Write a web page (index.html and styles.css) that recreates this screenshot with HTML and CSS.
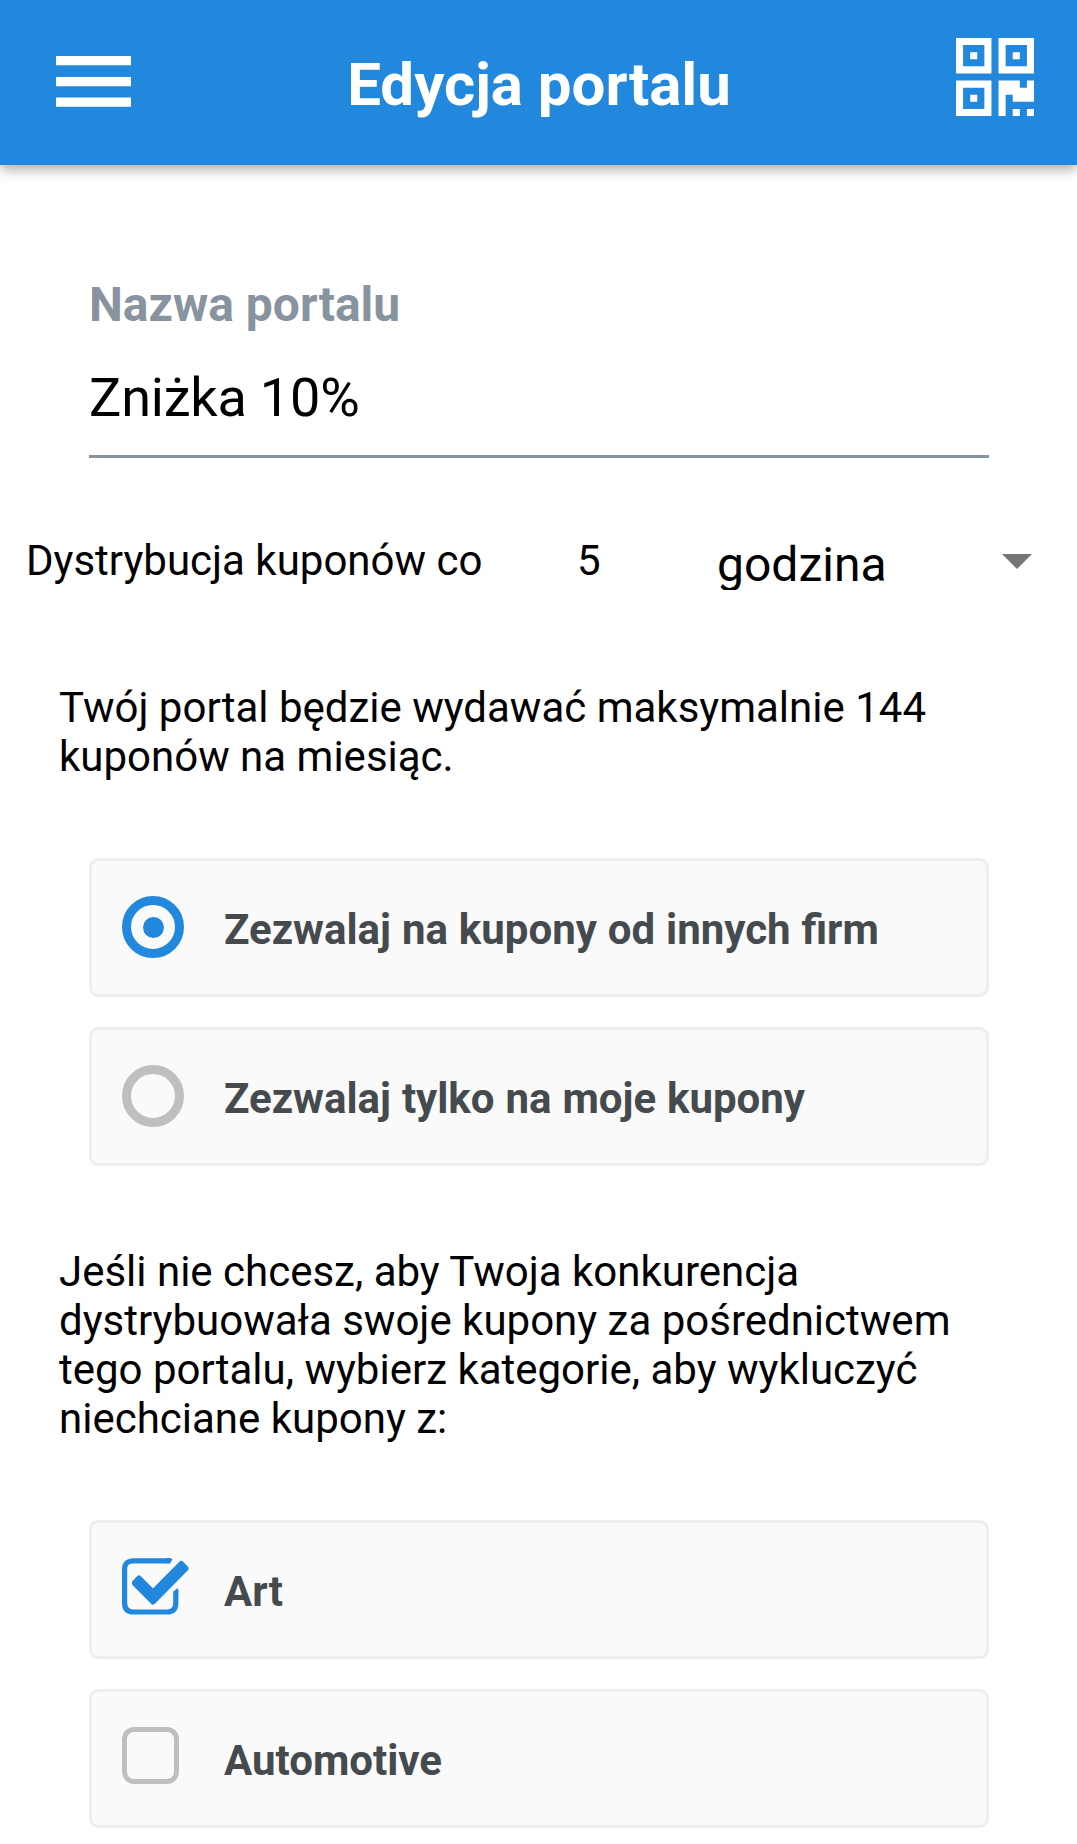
FILE: index.html
```html
<!DOCTYPE html>
<html lang="pl">
<head>
<meta charset="utf-8">
<title>Edycja portalu</title>
<link rel="stylesheet" href="styles.css">
</head>
<body>
<header class="topbar">
  <svg class="menu-icon" viewBox="0 0 75 51"><path d="M0 0h75v9.2H0zM0 21h75v9.2H0zM0 41.6h75v9.2H0z" fill="#fff"/></svg>
  <h1 class="title">Edycja portalu</h1>
  <svg class="qr-icon" viewBox="0 0 11 11"><path fill="#fff" fill-rule="evenodd" d="M0 0h5v5H0zM1 1v3h3V1zM2 2h1v1H2zM6 0h5v5H6zM7 1v3h3V1zM8 2h1v1H8zM0 6h5v5H0zM1 7v3h3V7zM2 8h1v1H2zM6 6h3v1h1V6h1v3H8V8H7v3H6zM8 10h1v1H8zM10 10h1v1h-1z"/></svg>
</header>
<main>
  <div class="field">
    <div class="label">Nazwa portalu</div>
    <div class="value">Zniżka 10%</div>
  </div>
  <div class="frequency">
    <span class="frequency-label">Dystrybucja kuponów co</span>
    <span class="frequency-count">5</span>
    <span class="frequency-unit">godzina</span>
    <svg class="caret" viewBox="0 0 30 15"><path d="M0 0h30L15 15z" fill="#757575"/></svg>
  </div>
  <p class="text">Twój portal będzie wydawać maksymalnie 144<br>kuponów na miesiąc.</p>
  <div class="options">
    <div class="option"><span class="mark"><span class="radio radio-on"></span></span>Zezwalaj na kupony od innych firm</div>
    <div class="option"><span class="mark"><span class="radio"></span></span>Zezwalaj tylko na moje kupony</div>
  </div>
  <p class="text">Jeśli nie chcesz, aby Twoja konkurencja<br>dystrybuowała swoje kupony za pośrednictwem<br>tego portalu, wybierz kategorie, aby wykluczyć<br>niechciane kupony z:</p>
  <div class="options">
    <div class="option"><span class="mark"><svg class="check" viewBox="0 0 68 57"><path d="M49 2.8H11.5Q2.6 2.8 2.6 11.5V45Q2.6 54 11.5 54H45Q53.8 54 53.8 45V33" fill="none" stroke="#2288dd" stroke-width="5.2"/><path d="M46 8l6-8h5v33l-6.500 1z" fill="#fafafa"/><path d="M47.500 0Q50 .5 50.700 1.500L47.200 5.300H44V0zM51.200 35V33.800L55.200 30.200Q56.400 30.500 56.400 32.500V35z" fill="#2288dd"/><path d="M13 24.500L17 20.500L31 34.500L59.200 6L63.500 10.500L31 43.500L13 25.500z" fill="#2288dd" stroke="#2288dd" stroke-width="6" stroke-linejoin="round"/></svg></span>Art</div>
    <div class="option"><span class="mark"><span class="checkbox"></span></span>Automotive</div>
  </div>
</main>
</body>
</html>
```
FILE: styles.css
```css
* { box-sizing: border-box; }
body {
  margin: 0;
  height: 1844px;
  overflow: hidden;
  background: #fff;
  color: #000;
  font: 42px/49px Roboto, sans-serif;
}
.topbar {
  display: flex;
  justify-content: space-between;
  height: 165px;
  padding: 38px 43px 0 56px;
  background: #2288dd;
  box-shadow: 0 4px 12px rgba(0, 0, 0, .35);
}
.menu-icon { width: 75px; height: 51px; margin-top: 18px; }
.title {
  margin: 12px 9px 0 0;
  color: #fff;
  font-size: 60px;
  line-height: 70px;
  font-weight: 700;
}
.qr-icon { width: 78px; height: 78px; }
.field {
  margin: 112px 88px 0 89px;
  padding-bottom: 25px;
  border-bottom: 3px solid #8794a0;
}
.label {
  color: #8794a0;
  font-size: 48px;
  line-height: 56px;
  font-weight: 700;
}
.value { margin-top: 33px; font-size: 54px; line-height: 64px; letter-spacing: -.2px; }
.frequency {
  display: flex;
  align-items: flex-start;
  height: 56px;
  margin-top: 78px;
  padding: 0 45px 0 26px;
}
.frequency-label { width: 551px; }
.frequency-count { width: 140px; }
.frequency-unit {
  flex: 1;
  height: 53px;
  margin-top: 1px;
  overflow: hidden;
  font-size: 48px;
  line-height: 56px;
}
.caret { width: 30px; height: 15px; margin-top: 18px; }
.text { margin: 91px 59px 77px; }
.options {
  display: flex;
  flex-direction: column;
  gap: 30px;
  margin: 0 88px 0 89px;
}
.options + .text { margin-top: 81px; }
.option {
  display: flex;
  align-items: flex-start;
  height: 139px;
  padding: 44px 30px 0;
  border: 3px solid #eeeeee;
  border-radius: 9px;
  background: #fafafa;
  color: #444a4e;
  font-weight: 700;
  word-spacing: .5px;
}
.mark { width: 102px; margin-top: -9px; }
.radio {
  display: flex;
  align-items: center;
  justify-content: center;
  width: 62px;
  height: 62px;
  border: 9px solid #bfbfbf;
  border-radius: 50%;
}
.radio-on { border-color: #2288dd; }
.radio-on::before {
  content: "";
  width: 21px;
  height: 21px;
  border-radius: 50%;
  background: #2288dd;
}
.check { display: block; width: 68px; height: 57px; }
.checkbox {
  display: block;
  width: 57px;
  height: 57px;
  border: 5px solid #bfbfbf;
  border-radius: 12px;
}
```
